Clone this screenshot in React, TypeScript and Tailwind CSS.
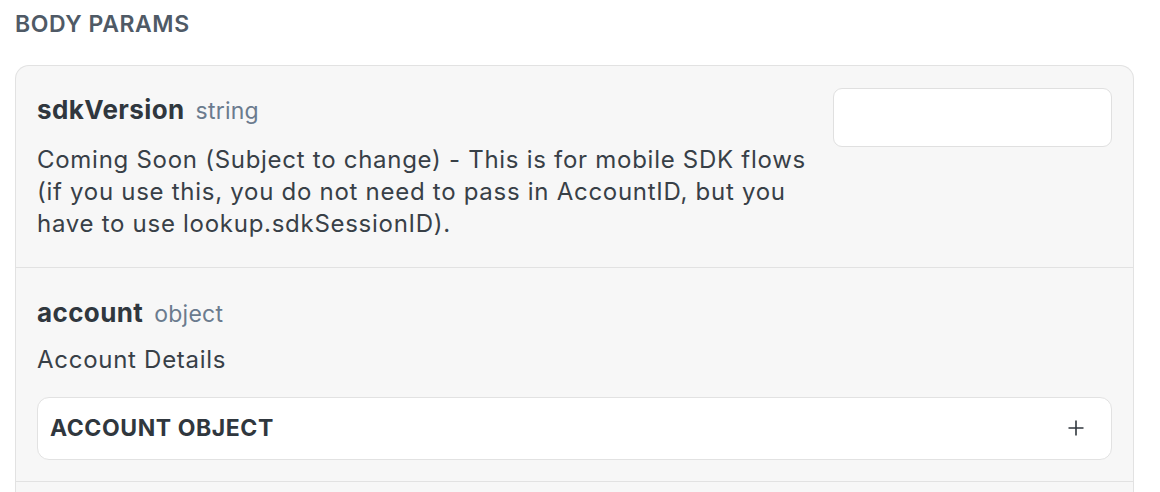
function ParamName({ name, type }: { name: string; type: string }) {
  return (
    <div className="flex items-baseline gap-[11px]">
      <span className="text-[26px] font-bold tracking-[0.015em] text-[#30373e]">{name}</span>
      <span className="text-[23px] tracking-[0.01em] text-[#6b7b8e]">{type}</span>
    </div>
  );
}

function PlusIcon() {
  return (
    <svg width="18" height="18" viewBox="0 0 18 18" fill="none" stroke="#30373e" strokeWidth="1.6">
      <path d="M9 1.5v15M1.5 9h15" />
    </svg>
  );
}

export default function App() {
  return (
    <div className="h-[492px] overflow-hidden bg-white px-[15px] pt-[7px] font-['Inter',sans-serif] text-[#384047]">
      <h2 className="text-[23px] font-semibold tracking-[0.025em] text-[#4f5a66]">BODY PARAMS</h2>

      <div className="mt-[23px] w-[1119px] rounded-t-[14px] border border-b-0 border-[#e2e2e2] bg-[#f7f7f7]">
        <div className="flex items-start justify-between gap-6 border-b border-[#e2e2e2] px-[21px] pt-[24px] pb-[27px]">
          <div className="w-[790px]">
            <ParamName name="sdkVersion" type="string" />
            <p className="mt-[15px] whitespace-nowrap text-[24px] leading-[32px] tracking-[0.03em]">
              Coming Soon (Subject to change) - This is for mobile SDK flows
              <br />
              (if you use this, you do not need to pass in AccountID, but you
              <br />
              have to use lookup.sdkSessionID).
            </p>
          </div>
          <input
            type="text"
            className="-mt-[2px] h-[59px] w-[279px] rounded-[9px] border border-[#e0e0e0] bg-white px-3 text-[20px] outline-none"
          />
        </div>

        <div className="border-b border-[#e2e2e2] px-[21px] pt-[25px] pb-[21px]">
          <ParamName name="account" type="object" />
          <p className="mt-[12px] text-[24px] leading-[32px] tracking-[0.03em]">Account Details</p>
          <div className="mt-[21px] flex h-[63px] items-center justify-between rounded-[12px] border border-[#e2e2e2] bg-white pl-[12px] pr-[26px]">
            <span className="text-[23px] font-bold tracking-[0.025em] text-[#30373e]">ACCOUNT OBJECT</span>
            <PlusIcon />
          </div>
        </div>

        <div className="h-[20px]" />
      </div>
    </div>
  );
}
